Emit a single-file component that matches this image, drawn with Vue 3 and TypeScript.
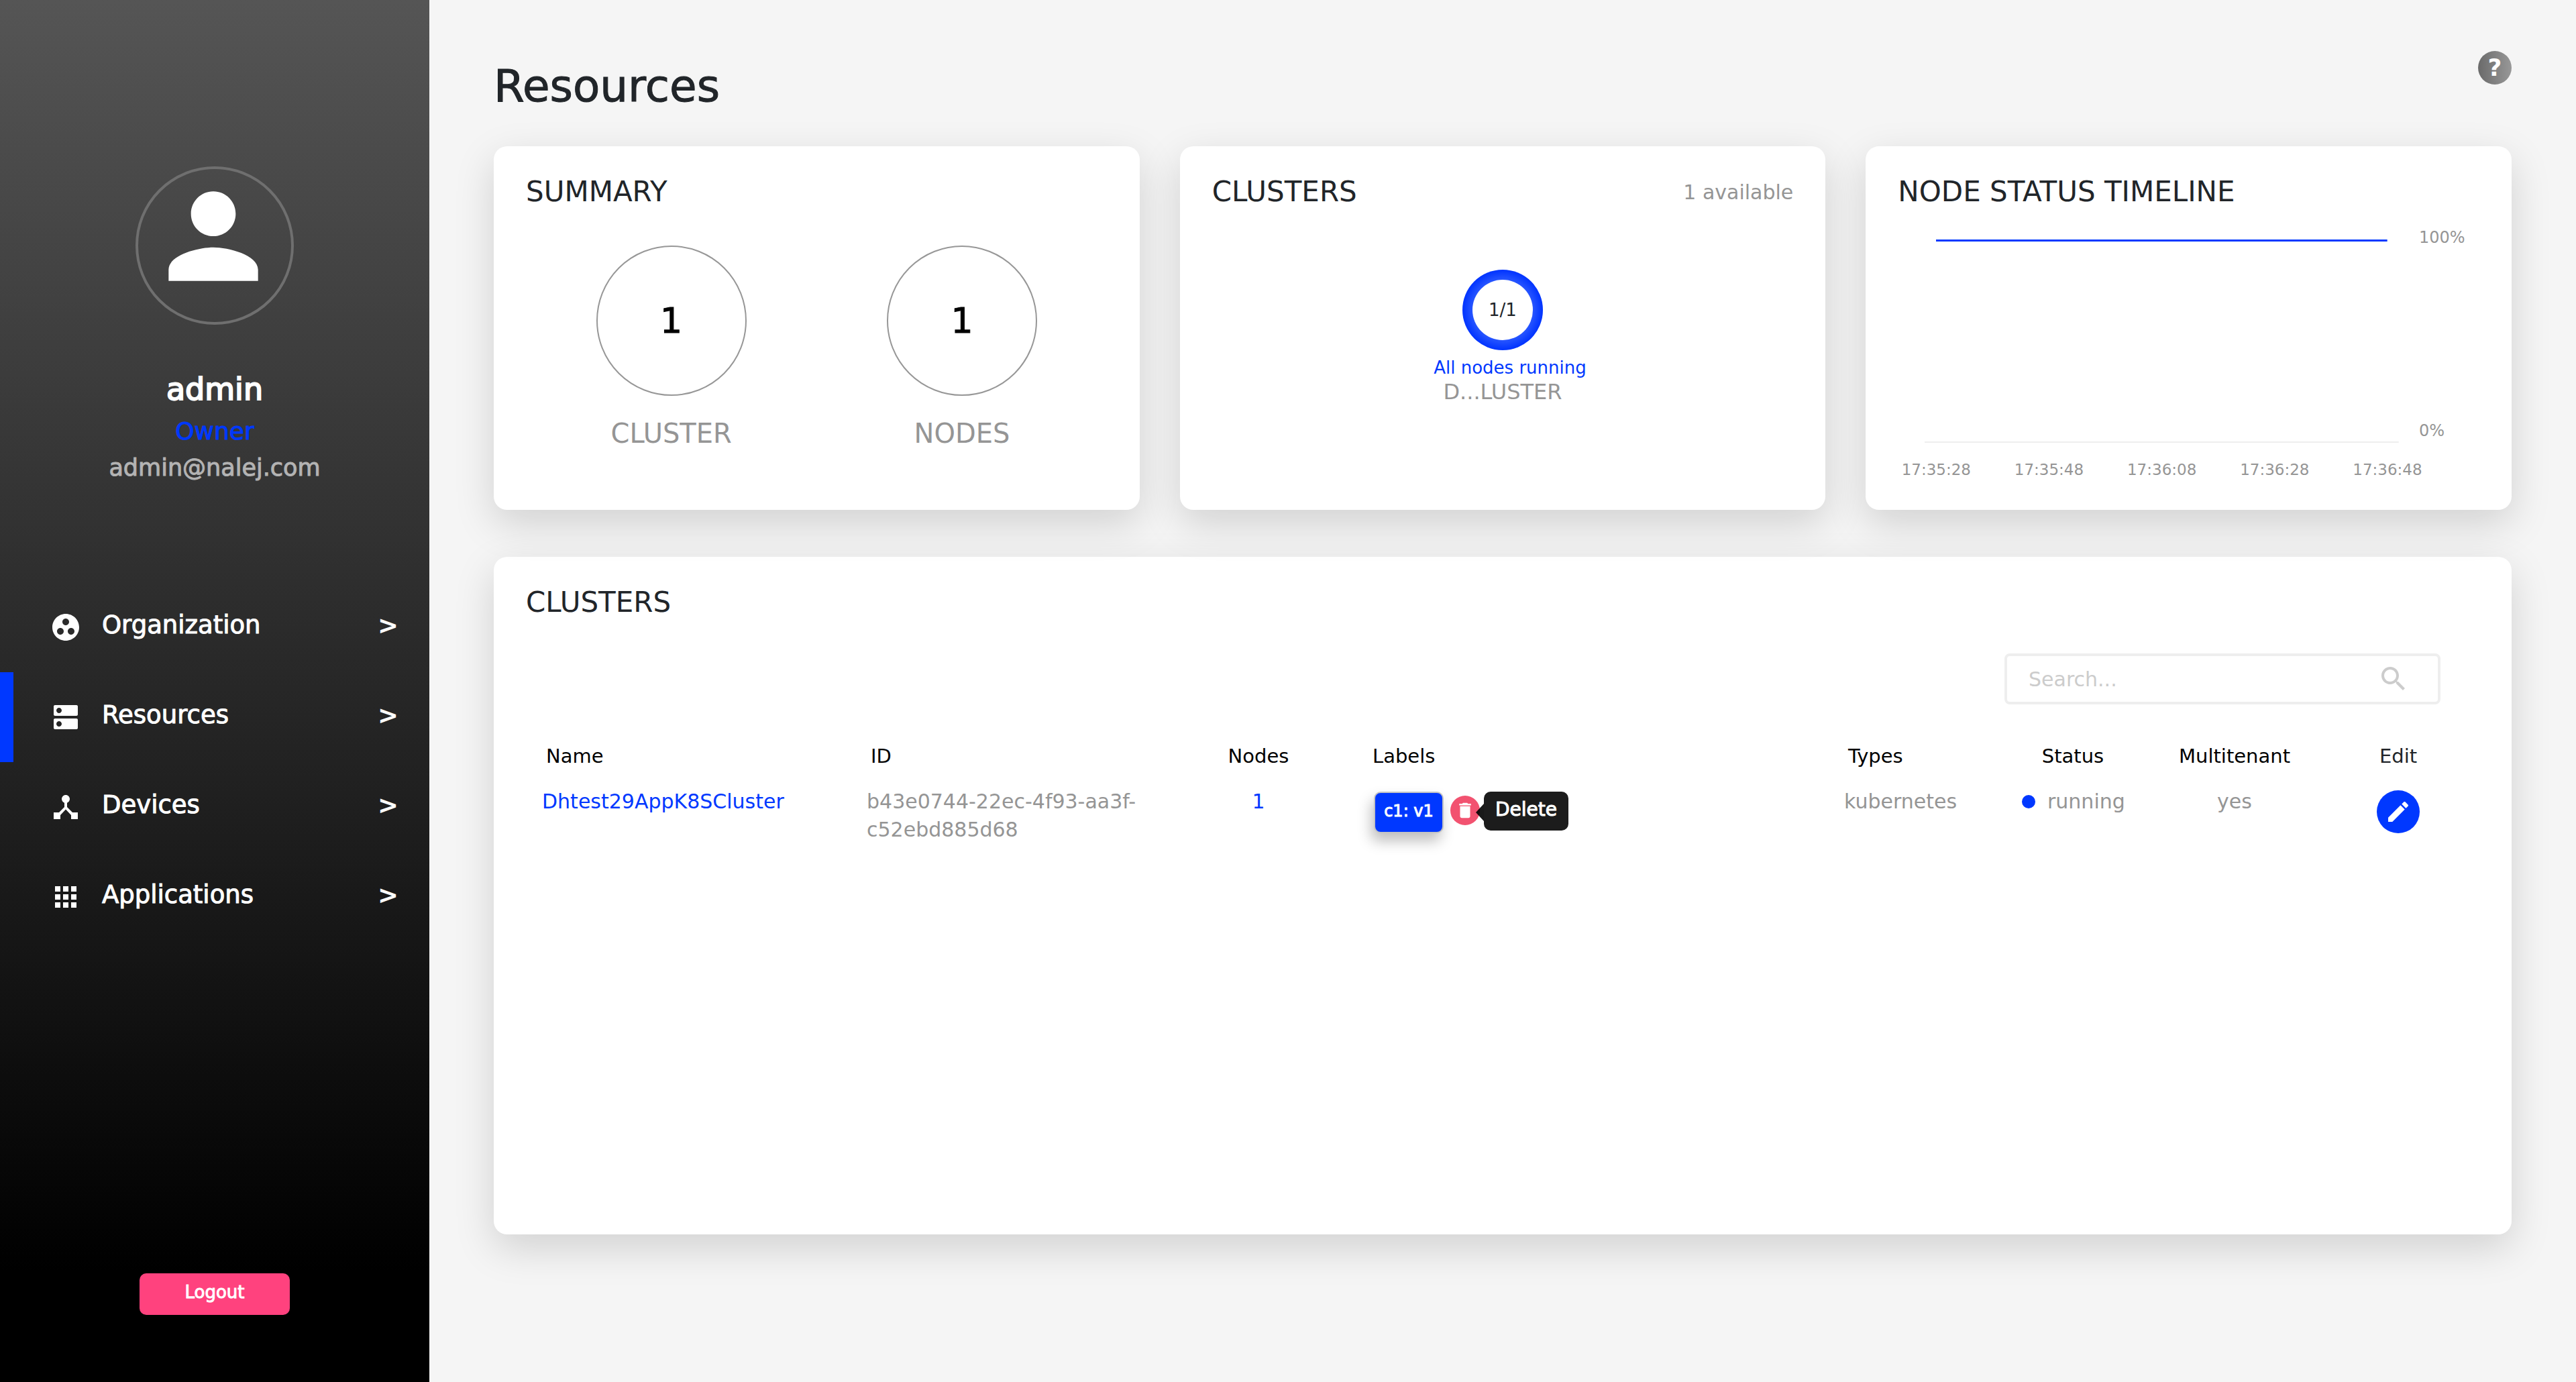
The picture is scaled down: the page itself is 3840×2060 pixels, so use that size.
<script setup lang="ts">
import { ref } from 'vue'

interface NavItem {
  label: string
  path: string
  active: boolean
}

interface Cluster {
  name: string
  id: string
  nodes: number
  label: string
  type: string
  status: string
  multitenant: string
}

const navItems: NavItem[] = [
  {
    label: 'Organization',
    active: false,
    path: 'M12 2C6.48 2 2 6.48 2 12s4.48 10 10 10 10-4.48 10-10S17.52 2 12 2zM8 17.5c-1.38 0-2.5-1.12-2.5-2.5s1.12-2.5 2.5-2.5 2.5 1.12 2.5 2.5-1.12 2.5-2.5 2.5zM9.5 8c0-1.38 1.12-2.5 2.5-2.5s2.5 1.12 2.5 2.5-1.12 2.5-2.5 2.5S9.5 9.38 9.5 8zm6.5 9.5c-1.38 0-2.5-1.12-2.5-2.5s1.12-2.5 2.5-2.5 2.5 1.12 2.5 2.5-1.12 2.5-2.5 2.5z',
  },
  {
    label: 'Resources',
    active: true,
    path: 'M20 13H4c-.55 0-1 .45-1 1v6c0 .55.45 1 1 1h16c.55 0 1-.45 1-1v-6c0-.55-.45-1-1-1zM7 19c-1.1 0-2-.9-2-2s.9-2 2-2 2 .9 2 2-.9 2-2 2zM20 3H4c-.55 0-1 .45-1 1v6c0 .55.45 1 1 1h16c.55 0 1-.45 1-1V4c0-.55-.45-1-1-1zM7 9c-1.1 0-2-.9-2-2s.9-2 2-2 2 .9 2 2-.9 2-2 2z',
  },
  {
    label: 'Devices',
    active: false,
    path: 'M17 16l-4-4V8.82C14.16 8.4 15 7.3 15 6c0-1.66-1.34-3-3-3S9 4.34 9 6c0 1.3.84 2.4 2 2.82V12l-4 4H3v5h5v-3.05l4-4.2 4 4.2V21h5v-5h-4z',
  },
  {
    label: 'Applications',
    active: false,
    path: 'M4 8h4V4H4v4zm6 12h4v-4h-4v4zm-6 0h4v-4H4v4zm0-6h4v-4H4v4zm6 0h4v-4h-4v4zm6-10v4h4V4h-4zm-6 4h4V4h-4v4zm6 6h4v-4h-4v4zm0 6h4v-4h-4v4z',
  },
]

const counts = [
  { value: 1, label: 'CLUSTER' },
  { value: 1, label: 'NODES' },
]

const times = ['17:35:28', '17:35:48', '17:36:08', '17:36:28', '17:36:48']

const clusters: Cluster[] = [
  {
    name: 'Dhtest29AppK8SCluster',
    id: 'b43e0744-22ec-4f93-aa3f-c52ebd885d68',
    nodes: 1,
    label: 'c1: v1',
    type: 'kubernetes',
    status: 'running',
    multitenant: 'yes',
  },
]

const search = ref('')
</script>

<template>
  <div class="page">
    <aside class="sidebar">
      <div class="avatar">
        <svg viewBox="0 0 24 24" aria-hidden="true">
          <path d="M12 12c2.21 0 4-1.79 4-4s-1.79-4-4-4-4 1.79-4 4 1.79 4 4 4zm0 2c-2.67 0-8 1.34-8 4v2h16v-2c0-2.66-5.33-4-8-4z" />
        </svg>
      </div>
      <div class="user-name">admin</div>
      <div class="user-role">Owner</div>
      <div class="user-mail">admin@nalej.com</div>

      <nav class="nav">
        <a v-for="item in navItems" :key="item.label" href="#" class="nav-item" :class="{ active: item.active }">
          <svg class="nav-icon" viewBox="0 0 24 24" aria-hidden="true"><path :d="item.path" /></svg>
          <span class="nav-label">{{ item.label }}</span>
          <span class="nav-arrow">&gt;</span>
        </a>
      </nav>

      <button type="button" class="logout">Logout</button>
    </aside>

    <main class="main">
      <header class="header">
        <h1>Resources</h1>
        <button type="button" class="help">?</button>
      </header>

      <div class="cards">
        <section class="card">
          <h2>SUMMARY</h2>
          <div class="counts">
            <div v-for="c in counts" :key="c.label" class="count">
              <div class="count-circle">{{ c.value }}</div>
              <div class="count-label">{{ c.label }}</div>
            </div>
          </div>
        </section>

        <section class="card">
          <div class="card-head">
            <h2>CLUSTERS</h2>
            <span class="available">1 available</span>
          </div>
          <div class="cluster">
            <div class="donut">
              <div class="donut-hole">1/1</div>
            </div>
            <div class="cluster-state">All nodes running</div>
            <div class="cluster-name">D...LUSTER</div>
          </div>
        </section>

        <section class="card">
          <h2>NODE STATUS TIMELINE</h2>
          <div class="chart">
            <svg class="plot" viewBox="0 0 706 304" preserveAspectRatio="none" aria-hidden="true">
              <rect x="17" y="1" width="672" height="3" fill="#0038ff" />
              <rect x="0" y="302" width="706" height="2" fill="#eeeeee" />
            </svg>
            <div class="y-axis">
              <span>100%</span>
              <span>0%</span>
            </div>
          </div>
          <div class="x-axis">
            <span v-for="t in times" :key="t">{{ t }}</span>
          </div>
        </section>
      </div>

      <section class="card list-card">
        <h2>CLUSTERS</h2>
        <label class="search">
          <input v-model="search" type="text" placeholder="Search..." aria-label="Search clusters" />
          <svg viewBox="0 0 24 24" aria-hidden="true">
            <path d="M15.5 14h-.79l-.28-.27C15.41 12.59 16 11.11 16 9.5 16 5.91 13.09 3 9.5 3S3 5.91 3 9.5 5.91 16 9.5 16c1.61 0 3.09-.59 4.23-1.57l.27.28v.79l5 4.99L20.49 19l-4.99-5zm-6 0C7.01 14 5 11.99 5 9.5S7.01 5 9.5 5 14 7.01 14 9.5 11.99 14 9.5 14z" />
          </svg>
        </label>

        <table>
          <colgroup>
            <col class="col-name" />
            <col class="col-id" />
            <col class="col-nodes" />
            <col />
            <col class="col-types" />
            <col class="col-status" />
            <col class="col-multi" />
            <col class="col-edit" />
          </colgroup>
          <thead>
            <tr>
              <th>Name</th>
              <th>ID</th>
              <th class="center">Nodes</th>
              <th>Labels</th>
              <th>Types</th>
              <th class="center">Status</th>
              <th class="center">Multitenant</th>
              <th class="center muted-dark">Edit</th>
            </tr>
          </thead>
          <tbody>
            <tr v-for="c in clusters" :key="c.id">
              <td><a href="#">{{ c.name }}</a></td>
              <td>{{ c.id }}</td>
              <td class="center"><a href="#">{{ c.nodes }}</a></td>
              <td>
                <div class="labels">
                  <span class="chip">{{ c.label }}</span>
                  <span class="delete-wrap">
                    <button type="button" class="delete" aria-label="Delete">
                      <svg viewBox="0 0 24 24" aria-hidden="true">
                        <path d="M6 19c0 1.1.9 2 2 2h8c1.1 0 2-.9 2-2V7H6v12z" />
                        <path d="M19 4h-3.500l-1-1h-5l-1 1H5v2h14V4z" />
                      </svg>
                    </button>
                    <span class="tooltip" role="tooltip">Delete</span>
                  </span>
                </div>
              </td>
              <td>{{ c.type }}</td>
              <td>
                <div class="status"><span class="dot"></span>{{ c.status }}</div>
              </td>
              <td class="center">{{ c.multitenant }}</td>
              <td class="center">
                <button type="button" class="edit" aria-label="Edit">
                  <svg viewBox="0 0 24 24" aria-hidden="true">
                    <path d="M3 17.250V21h3.750L17.810 9.940l-3.750-3.750L3 17.250zM20.710 7.040c.39-.39.39-1.020 0-1.410l-2.340-2.340c-.39-.39-1.020-.39-1.410 0l-1.830 1.830 3.750 3.750 1.830-1.830z" />
                  </svg>
                </button>
              </td>
            </tr>
          </tbody>
        </table>
      </section>
    </main>
  </div>
</template>

<style>
body {
  margin: 0;
  background: #f5f5f5;
}
</style>

<style scoped>
.page,
.page * {
  box-sizing: border-box;
}

.page {
  display: flex;
  min-height: 100vh;
  font-family: 'DejaVu Sans', Verdana, sans-serif;
  color: #212529;
}

a {
  color: #0038ff;
  text-decoration: none;
}

button {
  padding: 0;
  border: 0;
  font-family: inherit;
  color: #ffffff;
  cursor: pointer;
}

/* Sidebar */
.sidebar {
  display: flex;
  flex: 0 0 640px;
  flex-direction: column;
  align-items: center;
  padding: 248px 0 100px;
  background: linear-gradient(180deg, #555555 0%, #000000 92%);
}

.avatar {
  display: flex;
  justify-content: center;
  width: 236px;
  height: 236px;
  padding-right: 4px;
  border: 4px solid #6f6f6f;
  border-radius: 50%;
}

.avatar svg {
  width: 200px;
  height: 200px;
  fill: #ffffff;
}

.user-name {
  margin-top: 68px;
  font-size: 46px;
  line-height: 56px;
  color: #ffffff;
  -webkit-text-stroke: 2px currentColor;
}

.user-role {
  margin-top: 8px;
  font-size: 36px;
  line-height: 54px;
  color: #0038ff;
  -webkit-text-stroke: 1px currentColor;
}

.user-mail {
  font-size: 35px;
  line-height: 54px;
  color: #b3b3b3;
  -webkit-text-stroke: 1px currentColor;
}

.nav {
  align-self: stretch;
  margin-top: 144px;
}

.nav-item {
  display: flex;
  align-items: center;
  height: 134px;
  padding: 0 46px 0 54px;
  border-left: 20px solid transparent;
  font-size: 37px;
  color: #ffffff;
}

.nav-item.active {
  border-left-color: #0038ff;
}

.nav-icon {
  width: 48px;
  height: 48px;
  fill: currentColor;
}

.nav-label {
  flex: 1;
  padding: 0 0 8px 30px;
  -webkit-text-stroke: 1px currentColor;
}

.nav-arrow {
  padding-bottom: 6px;
  font-weight: 700;
}

.logout {
  width: 224px;
  height: 62px;
  margin-top: auto;
  padding-bottom: 6px;
  border-radius: 10px;
  background: #ff427e;
  font-size: 26px;
  -webkit-text-stroke: 1px currentColor;
}

/* Main area */
.main {
  flex: 1;
  min-width: 0;
  padding: 76px 96px 100px;
}

.header {
  display: flex;
  align-items: flex-start;
  justify-content: space-between;
  margin-bottom: 36px;
}

h1 {
  margin: 0;
  font-size: 66px;
  font-weight: 400;
  line-height: 106px;
  -webkit-text-stroke: 1px currentColor;
}

.help {
  width: 50px;
  height: 50px;
  border-radius: 50%;
  background: linear-gradient(90deg, #6a6a6a, #989898);
  font-size: 36px;
  font-weight: 700;
  line-height: 50px;
}

.cards {
  display: grid;
  grid-template-columns: repeat(3, minmax(0, 1fr));
  gap: 60px;
  margin-bottom: 70px;
}

.card {
  min-height: 542px;
  padding: 40px 48px;
  border-radius: 20px;
  background: #ffffff;
  box-shadow: 0 20px 60px rgba(0, 0, 0, 0.15);
}

h2 {
  margin: 0;
  font-size: 42px;
  font-weight: 400;
  line-height: 56px;
}

.counts {
  display: flex;
  margin-top: 52px;
}

.count {
  display: flex;
  flex: 1;
  flex-direction: column;
  align-items: center;
  gap: 28px;
}

.count-circle {
  display: flex;
  align-items: center;
  justify-content: center;
  width: 224px;
  height: 224px;
  border: 2px solid #979797;
  border-radius: 50%;
  font-size: 52px;
  color: #000000;
  -webkit-text-stroke: 1px currentColor;
}

.count-label {
  font-size: 40px;
  line-height: 56px;
  color: #959595;
}

.card-head {
  display: flex;
  align-items: center;
  justify-content: space-between;
}

.available {
  font-size: 30px;
  color: #959595;
}

.cluster {
  display: flex;
  flex-direction: column;
  align-items: center;
  margin-top: 88px;
}

.donut {
  display: flex;
  width: 120px;
  height: 120px;
  padding: 15px;
  border-radius: 50%;
  background: radial-gradient(circle closest-side, #2f5cff 70%, #0033ff 100%);
}

.donut-hole {
  display: flex;
  flex: 1;
  align-items: center;
  justify-content: center;
  border-radius: 50%;
  background: #ffffff;
  font-size: 26px;
}

.cluster-state {
  margin-top: 10px;
  padding-left: 22px;
  font-size: 26px;
  line-height: 32px;
  color: #0038ff;
}

.cluster-name {
  font-size: 32px;
  line-height: 40px;
  color: #959595;
}

.chart {
  display: flex;
  height: 320px;
  margin: 26px 0 0 40px;
}

.plot {
  flex: 1;
  min-width: 0;
  height: 304px;
  margin-top: 16px;
}

.y-axis {
  display: flex;
  flex: 0 0 120px;
  flex-direction: column;
  justify-content: space-between;
  padding: 0 0 4px 30px;
  font-size: 24px;
  line-height: 28px;
  color: #959595;
}

.x-axis {
  display: flex;
  justify-content: space-between;
  margin-top: 26px;
  padding: 0 85px 0 5px;
  font-size: 23px;
  line-height: 28px;
  color: #959595;
}

.x-axis span {
  width: 104px;
  text-align: center;
}

/* Cluster list */
.list-card {
  min-height: 1010px;
}

.search {
  display: flex;
  align-items: center;
  width: 650px;
  height: 76px;
  margin: 48px 58px 40px auto;
  padding: 0 42px 0 32px;
  border: 4px solid #eeeeee;
  border-radius: 8px;
}

.search input {
  flex: 1;
  min-width: 0;
  padding: 0;
  border: 0;
  outline: 0;
  background: none;
  font-family: inherit;
  font-size: 30px;
  color: #212529;
}

.search input::placeholder {
  color: #cccccc;
}

.search svg {
  width: 48px;
  height: 48px;
  fill: #cccccc;
}

table {
  width: 100%;
  border-collapse: collapse;
  table-layout: fixed;
}

.col-name {
  width: 484px;
}

.col-id {
  width: 468px;
}

.col-nodes {
  width: 280px;
}

.col-types {
  width: 247px;
}

.col-status {
  width: 236px;
}

.col-multi {
  width: 246px;
}

.col-edit {
  width: 242px;
}

th {
  padding: 16px 0 8px 30px;
  font-size: 29px;
  font-weight: 400;
  line-height: 42px;
  text-align: left;
  color: #000000;
}

td {
  padding: 18px 0 18px 24px;
  font-size: 30px;
  line-height: 42px;
  vertical-align: top;
  color: #959595;
}

th.center,
td.center {
  padding-right: 0;
  padding-left: 0;
  text-align: center;
}

th.muted-dark {
  color: #212529;
}

.labels {
  display: flex;
  align-items: flex-start;
  gap: 10px;
  padding: 6px 0 0 8px;
}

.chip {
  display: flex;
  align-items: center;
  justify-content: center;
  width: 104px;
  height: 62px;
  padding-bottom: 4px;
  border: 2px solid #c4c4c4;
  border-radius: 10px;
  background: #0038ff;
  box-shadow: -4px 12px 20px rgba(0, 0, 0, 0.25);
  font-size: 24px;
  color: #ffffff;
  -webkit-text-stroke: 1px currentColor;
}

.delete-wrap {
  display: flex;
  position: relative;
  margin-top: 6px;
}

.delete {
  display: flex;
  align-items: center;
  justify-content: center;
  width: 44px;
  height: 44px;
  border-radius: 50%;
  background: #f25270;
}

.delete svg {
  width: 30px;
  height: 30px;
  fill: #ffffff;
}

.tooltip {
  display: flex;
  position: absolute;
  top: -6px;
  left: 50px;
  align-items: center;
  justify-content: center;
  width: 126px;
  height: 58px;
  padding-bottom: 4px;
  border-radius: 10px;
  background: #1c1c1c;
  font-size: 28px;
  color: #ffffff;
  -webkit-text-stroke: 1px currentColor;
}

.tooltip::before {
  position: absolute;
  top: 18px;
  right: 100%;
  border: solid transparent;
  border-width: 13px 12px 13px 0;
  border-right-color: rgba(0, 0, 0, 0.9);
  content: '';
}

.status {
  display: flex;
  align-items: center;
  gap: 18px;
  padding-left: 18px;
}

.dot {
  width: 20px;
  height: 20px;
  border-radius: 50%;
  background: #0038ff;
}

.edit {
  display: flex;
  align-items: center;
  justify-content: center;
  width: 64px;
  height: 64px;
  margin: 4px auto 0;
  border-radius: 50%;
  background: #0038ff;
}

.edit svg {
  width: 40px;
  height: 40px;
  fill: #ffffff;
}
</style>
